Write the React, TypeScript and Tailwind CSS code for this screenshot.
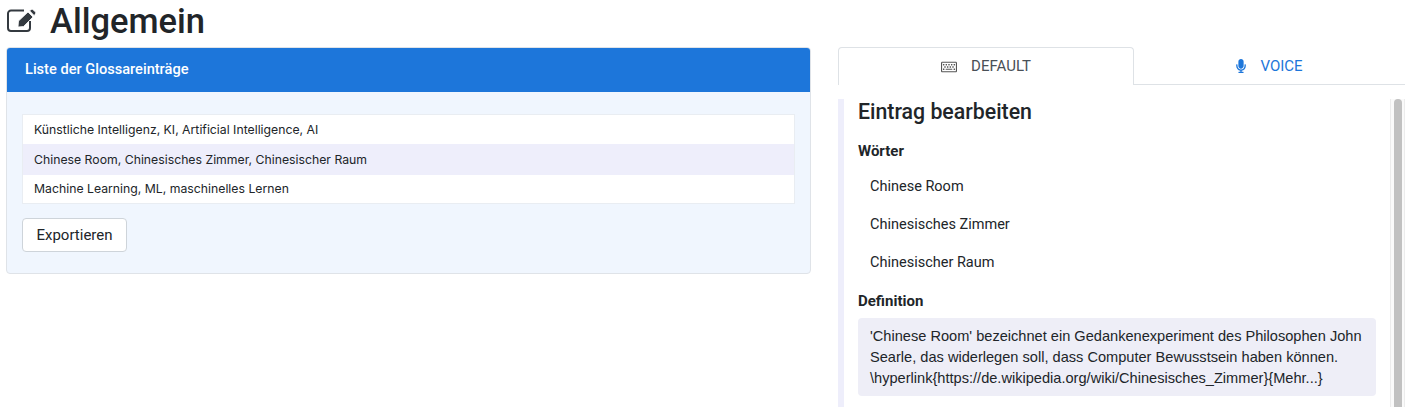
import { FaRegKeyboard, FaMicrophone } from "react-icons/fa";

const entries = [
  { text: "Künstliche Intelligenz, KI, Artificial Intelligence, AI", row: "h-[29px] pt-px" },
  { text: "Chinese Room, Chinesisches Zimmer, Chinesischer Raum", row: "h-[31px] pt-px bg-[#eeeefb]" },
  { text: "Machine Learning, ML, maschinelles Lernen", row: "h-[28px]" },
];

const words = ["Chinese Room", "Chinesisches Zimmer", "Chinesischer Raum"];

const definition =
  "'Chinese Room' bezeichnet ein Gedankenexperiment des Philosophen John Searle, das widerlegen soll, dass Computer Bewusstsein haben können. \\hyperlink{https://de.wikipedia.org/wiki/Chinesisches_Zimmer}{Mehr...}";

function EditIcon() {
  return (
    <svg viewBox="0 0 30 24" className="ml-[1px] mr-[13px] -mt-[5px] h-[24px] w-[30px] text-[#343a40]">
      <path
        d="M17 1.5H4A3 3 0 0 0 1 4.5V19A3 3 0 0 0 4 22H20A3 3 0 0 0 23 19V12"
        fill="none"
        stroke="currentColor"
        strokeWidth="2"
      />
      <path
        d="M11.5 12L21 3L26 8L16.5 17.5L11 18Z M22.5 1.7L24.5 .5Q25.3 0 26 .7L28.5 3Q29.2 3.8 28.5 4.6L27.3 6.7Z"
        fill="currentColor"
        stroke="white"
        strokeWidth="0.8"
      />
    </svg>
  );
}

export default function App() {
  return (
    <div className="h-[407px] overflow-hidden bg-white pl-[6px] pr-2 font-['Liberation_Sans',sans-serif] text-[#212529]">
      <h1 className="flex h-[47px] items-center font-['Roboto',sans-serif] text-[34.5px] font-medium leading-[42px]">
        <EditIcon />
        <span className="-mt-[5px]">Allgemein</span>
      </h1>

      <div className="flex gap-[27px]">
        {/* Glossary list */}
        <div className="h-[227px] w-[805px] overflow-hidden rounded border border-[#dfe3e8] bg-[#f0f6fe]">
          <div className="flex h-[44px] items-center bg-[#1d76da] pl-[18px] font-['Roboto',sans-serif] text-[14.6px] font-medium text-white">
            Liste der Glossareinträge
          </div>
          <div className="px-[15px] pt-[22px]">
            <ul className="border border-[#e9edf2] bg-white font-['Inter',sans-serif] text-[12.25px]">
              {entries.map((entry) => (
                <li key={entry.text} className={`flex items-center pl-[11px] ${entry.row}`}>
                  {entry.text}
                </li>
              ))}
            </ul>
            <button className="mt-[14px] h-[34px] w-[105px] rounded border border-[#ced4da] bg-white pt-px text-center font-['Roboto',sans-serif] text-[15px]">
              Exportieren
            </button>
          </div>
        </div>

        {/* Editor */}
        <div className="w-[567px] font-['Roboto',sans-serif]">
          <div className="flex h-[38px] border-b border-[#dee2e6] text-[15px]">
            <div className="-mb-px flex h-[38px] w-[296px] items-center justify-center gap-[14px] rounded-t border border-b-0 border-[#dee2e6] bg-white text-[#495057]">
              <FaRegKeyboard className="h-[16px] w-[16px] text-[#555]" />
              DEFAULT
            </div>
            <div className="flex flex-1 items-center justify-center gap-[12px] pr-[2px] pt-px text-[#1d76da]">
              <FaMicrophone className="h-[14px] w-[14px]" />
              VOICE
            </div>
          </div>

          <div className="mt-[14px] flex h-[320px]">
            <div className="flex-1 border-l-[6px] border-[#eeeefb] pl-[14px] pr-[14px]">
              <h2 className="text-[21.3px] font-medium leading-[26px]">Eintrag bearbeiten</h2>
              <h3 className="mt-[16px] text-[15px] font-bold leading-[20px]">Wörter</h3>
              <div className="mt-[7px] text-[14.5px]">
                {words.map((word) => (
                  <div key={word} className="flex h-[38px] items-center pl-[12px]">
                    {word}
                  </div>
                ))}
              </div>
              <h3 className="mt-[9px] text-[15px] font-bold leading-[20px]">Definition</h3>
              <p className="mt-[7px] rounded bg-[#eeeef7] px-[12px] pb-[7px] pt-[8px] font-['Liberation_Sans',sans-serif] text-[14.6px] leading-[21px]">
                {definition}
              </p>
            </div>
            <div className="w-[15px] border-x border-[#ececec] bg-[#fafafa] px-[3px]">
              <div className="h-full w-[8px] rounded-t-full bg-[#c1c1c1]" />
            </div>
          </div>
        </div>
      </div>
    </div>
  );
}
